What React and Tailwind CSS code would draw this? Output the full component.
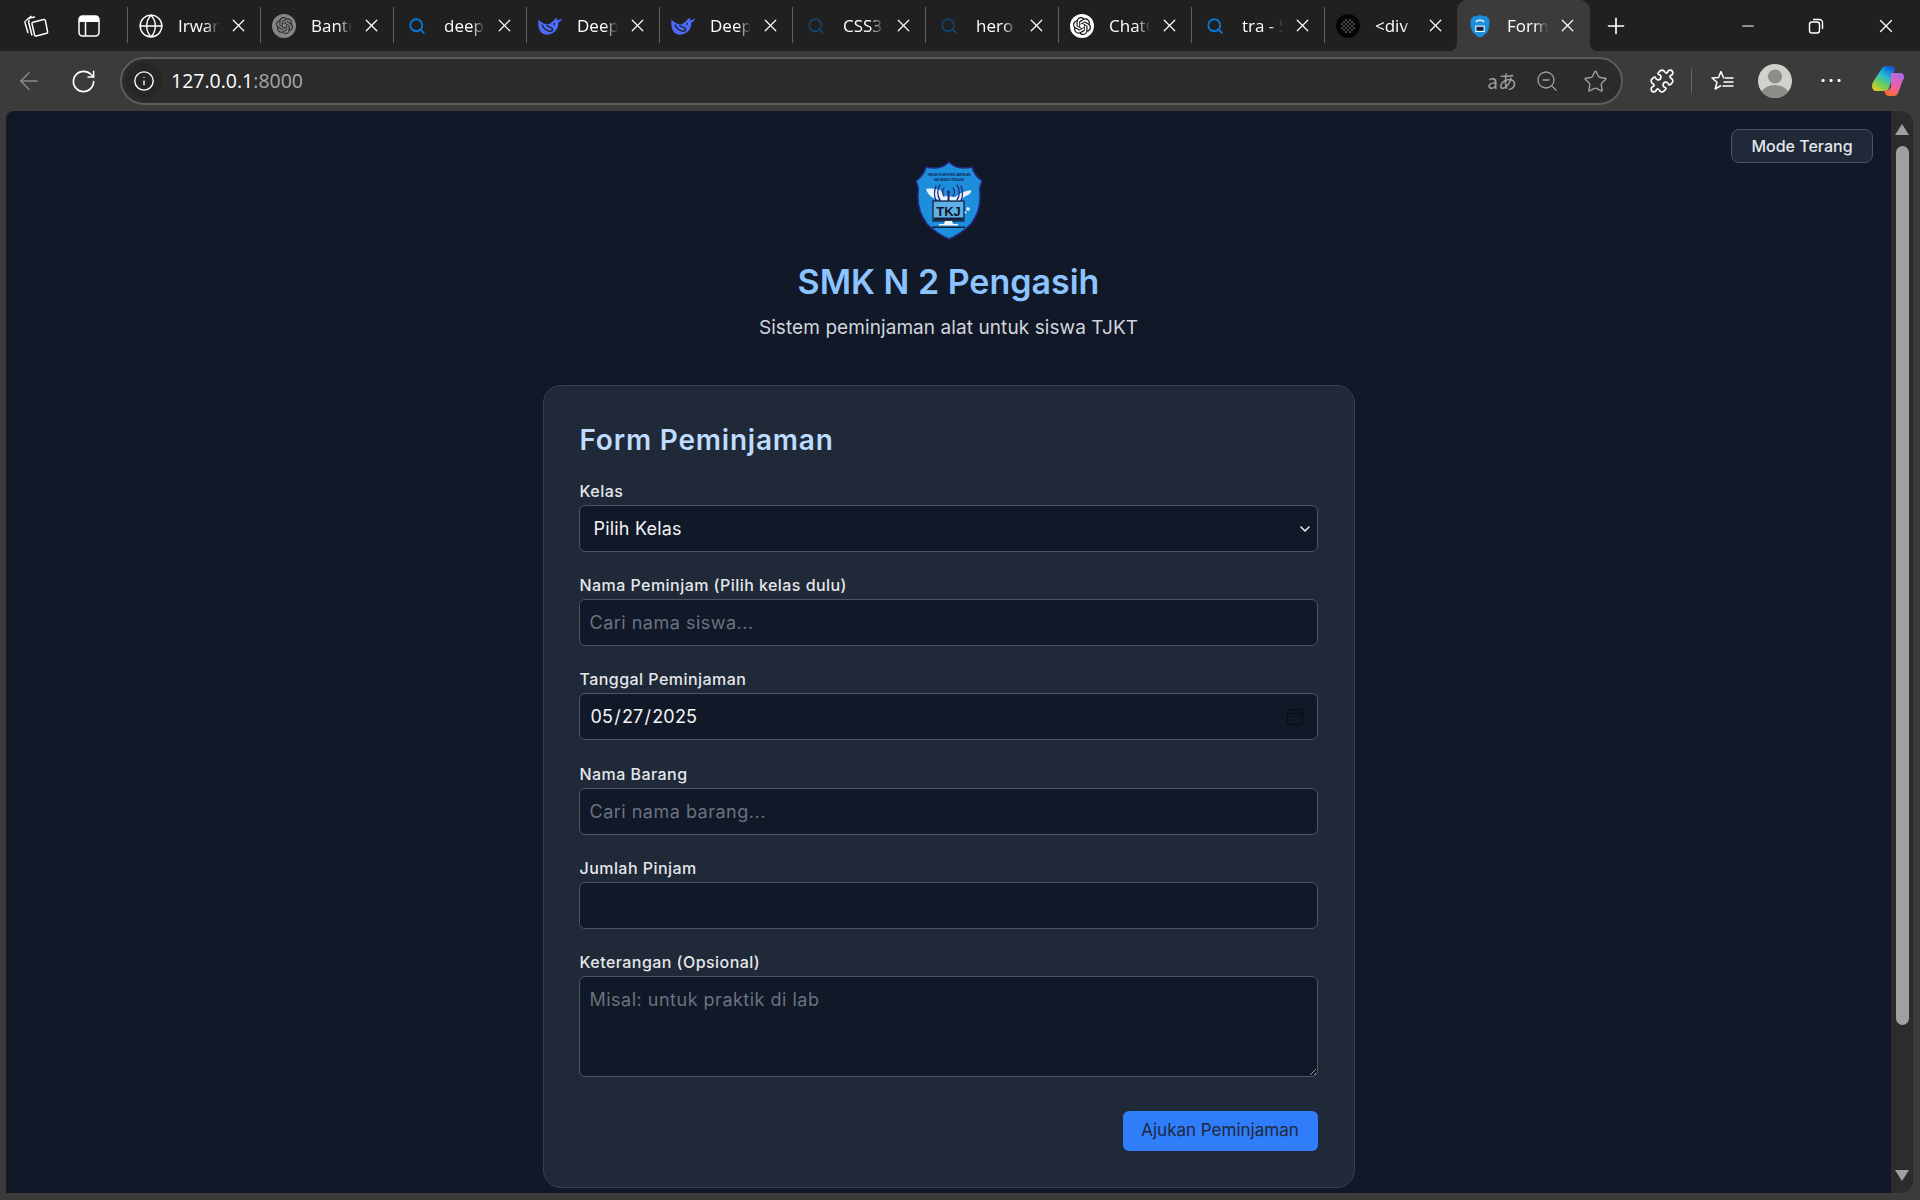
import { ArrowLeft, ChevronDown, Globe, Info, Minus, Plus, Puzzle, RotateCw, Search, Star, X, ZoomOut } from "lucide-react";
import { SiOpenai } from "react-icons/si";

function Workspaces() {
  return (
    <svg width="26" height="26" viewBox="0 0 26 26" fill="none" stroke="#fff" strokeWidth="1.5" strokeLinejoin="round">
      <path d="M3 7.5 8.5 3M5 20 2 9.5q-.3-1.2.8-1.6" />
      <path d="M6 6q.2-1.2 1.4-1.3L12 4M9 22.5 5.6 9q-.3-1.3 1-1.7" />
      <path d="M10 9.2 20.6 6.6q1.4-.3 1.8 1l2.2 11q.3 1.3-1 1.7L13.4 23q-1.4.3-1.8-1L9 10.9q-.3-1.3 1-1.7Z" />
    </svg>
  );
}

function VerticalTabs() {
  return (
    <svg width="22" height="22" viewBox="0 0 22 22" fill="none">
      <rect x="1" y="1" width="20" height="20" rx="3.5" stroke="#fff" strokeWidth="1.5" />
      <path d="M1 4.5A3.5 3.5 0 0 1 4.5 1h13A3.5 3.5 0 0 1 21 4.5V7H1Z" fill="#fff" />
      <path d="M7.5 7v14" stroke="#fff" strokeWidth="1.5" />
    </svg>
  );
}

function Whale() {
  return (
    <svg width="25" height="20" viewBox="0 0 24 19">
      <path
        d="M.5 3.500C3 6 6 8 9 8c2.500 0 3.500-2 6-3.500.5-1.500 2-2.500 3.500-3l-.5 2.500c1.500 0 3.500-.7 5-2-.3 2-1.800 3.500-3.500 4.200.3 5-2.500 9.500-7.500 11C7 19 2.500 17 1 12 .2 9 .2 6 .5 3.500Z"
        fill="#4d6bfe"
      />
      <path d="M4 8.500c1.500 3.500 4.500 6 8.500 6 1.800 0 2-2.500.3-3.200-1.500-.6-3-1.300-4.300-2.300" fill="none" stroke="#202020" strokeWidth="1.300" strokeLinecap="round" />
      <circle cx="15.500" cy="7.500" r=".9" fill="#202020" />
    </svg>
  );
}

function DotsFavicon() {
  const dots = [];
  for (let y = 0; y < 7; y++) {
    for (let x = 0; x < 7; x++) {
      if ((x - 3) * (x - 3) + (y - 3) * (y - 3) < 11 && (x + y) % 2 === 0) {
        dots.push(<rect key={`${x}-${y}`} x={5.4 + x * 2} y={5.4 + y * 2} width="1.3" height="1.3" fill="#a3a3a3" />);
      }
    }
  }
  return (
    <svg width="24" height="24" viewBox="0 0 24 24">
      <circle cx="12" cy="12" r="12" fill="#050505" />
      {dots}
    </svg>
  );
}

function Shield({ width, height, small = false }) {
  return (
    <svg width={width} height={height} viewBox="0 0 68 79">
      <path
        d="M34 1Q28 7 20 7 14 7 11 6 9 14 1 20 4 26 3 33 2 50 12 63 22 73 34 78 46 73 56 63 66 50 65 33 64 26 67 20 59 14 57 6 54 7 48 7 40 7 34 1Z"
        fill="#1c8edb"
        stroke={small ? "#1c8edb" : "#26277f"}
        strokeWidth="1.500"
      />
      {!small && (
        <>
          <text x="34" y="15" textAnchor="middle" fontSize="3.600" fontWeight="700" fill="#10204f" fontFamily="Liberation Sans" textLength="43" lengthAdjust="spacingAndGlyphs">TEKNIK KOMPUTER JARINGAN</text>
          <text x="34" y="19.500" textAnchor="middle" fontSize="3.400" fontWeight="700" fill="#10204f" fontFamily="Liberation Sans" textLength="30" lengthAdjust="spacingAndGlyphs">SMK NEGERI 2 PENGASIH</text>
          <path d="M11 28c5-1 9 0 14 1l5 6 10 1 8-5 8-2c1 2-2 5-5 6l-5 3-3 5-12 1-6-5-7-2c-3-2-6-5-7-9Z" fill="#e8f4fb" />
          <path d="M52 46l3 1-1 3-3-1ZM49 50l3 1-2 2Z" fill="#e8f4fb" />
          <g fill="none" stroke="#26277f" strokeWidth="1.300" strokeLinecap="round">
            <path d="M29 27c-2 2-2 6 0 8M38 27c2 2 2 6 0 8M25 24c-3 4-3 11 0 15M42 24c3 4 3 11 0 15M21 25c-2 5-2 10 0 15M46 25c2 5 2 10 0 15" />
          </g>
          <circle cx="33.500" cy="31" r="1.600" fill="#26277f" />
          <path d="M32.500 32h2v8h-2Z" fill="#26277f" />
          <rect x="18" y="40" width="31" height="20" fill="#5fb0e6" stroke="#14213d" strokeWidth="1.300" />
          <rect x="19" y="56.500" width="29" height="3" fill="#14213d" />
          <text x="33.500" y="54.500" textAnchor="middle" fontSize="13" fontWeight="700" fill="#0e1726" fontFamily="Liberation Sans">TKJ</text>
          <path d="M30 60h7l1 3h5v1.500H24V63h5Z" fill="#f3f8fb" />
          <rect x="17" y="65.500" width="33" height="1.500" fill="#14213d" />
        </>
      )}
      {small && (
        <>
          <rect x="18" y="38" width="32" height="22" fill="#e8f4fb" />
          <rect x="22" y="42" width="24" height="14" fill="#14213d" />
          <path d="M20 26c6-8 22-8 28 0" fill="none" stroke="#e8f4fb" strokeWidth="5" />
        </>
      )}
    </svg>
  );
}

function Restore() {
  return (
    <svg width="18" height="18" viewBox="0 0 18 18" fill="none" stroke="#fff" strokeWidth="1.400">
      <rect x="2.500" y="5" width="10" height="11" rx="2.500" />
      <path d="M6 2.500h6.500a3 3 0 0 1 3 3V12" />
    </svg>
  );
}

function Favorites() {
  return (
    <svg width="26" height="26" viewBox="0 0 26 26" fill="none" stroke="#fff" strokeWidth="1.500" strokeLinejoin="round">
      <path d="M15 9.800h-.5L12 3.500 9.500 9.500l-6.500.5 5 4.300-1.800 6.700 5.800-3.500" />
      <path d="M16 10h8M15 14h9M14 18h10" strokeLinecap="round" />
    </svg>
  );
}

function Avatar() {
  return (
    <svg width="34" height="34" viewBox="0 0 34 34">
      <clipPath id="avatar-clip"><circle cx="17" cy="17" r="17" /></clipPath>
      <g clipPath="url(#avatar-clip)">
        <rect width="34" height="34" fill="#d2d1cc" />
        <circle cx="17" cy="12.500" r="7" fill="#8e8c87" />
        <ellipse cx="17" cy="31" rx="14" ry="10" fill="#8e8c87" />
      </g>
    </svg>
  );
}

function Copilot() {
  return (
    <svg width="34" height="32" viewBox="0 0 34 32">
      <defs>
        <linearGradient id="cp-left" x1="0.700" y1="0" x2="0.100" y2="1">
          <stop offset="0" stopColor="#0f5fd8" />
          <stop offset="0.350" stopColor="#22b8d6" />
          <stop offset="0.700" stopColor="#7bd04a" />
          <stop offset="1" stopColor="#f7c92e" />
        </linearGradient>
        <linearGradient id="cp-right" x1="0.800" y1="0" x2="0.300" y2="1">
          <stop offset="0" stopColor="#a86bf0" />
          <stop offset="0.550" stopColor="#ee5fa4" />
          <stop offset="1" stopColor="#f5702e" />
        </linearGradient>
      </defs>
      <path d="M11 3q1-2 4-2h5q3 0 4 3l-6 19q-1 3-4 3H6q-5 0-5-5 0-2 1-4Z" fill="url(#cp-left)" />
      <path d="M20 8h9q4 0 4 4 0 2-1 3l-5 13q-1 3-4 3h-5q-3 0-4-3l-1-3h3q3 0 4-3Z" fill="url(#cp-right)" />
    </svg>
  );
}

function CalendarIcon() {
  return (
    <svg width="18" height="18" viewBox="0 0 18 18" fill="none" stroke="#0a0e17" strokeWidth="1.400">
      <rect x="1.500" y="1.500" width="15" height="15" rx="2.500" />
      <path d="M1.500 5.500h15" />
      <path d="M5 9h1.500M8.300 9h1.500M11.600 9h1.500M5 12.500h1.500M8.300 12.500h1.500" strokeWidth="1.800" />
    </svg>
  );
}

const TABS = [
  { title: "Irwan", icon: <Globe size={26} strokeWidth={1.3} color="#fff" /> },
  { title: "Bantu", icon: <span className="flex h-6 w-6 items-center justify-center rounded-full bg-[#858585]"><SiOpenai size={17} color="#2a2a2a" /></span> },
  { title: "deepseek", icon: <Search size={18} strokeWidth={2.4} color="#0a78d4" /> },
  { title: "Deep", icon: <Whale /> },
  { title: "Deep", icon: <Whale /> },
  { title: "CSS3", icon: <Search size={18} strokeWidth={2.4} color="#16406a" /> },
  { title: "hero", icon: <Search size={18} strokeWidth={2.4} color="#16406a" /> },
  { title: "ChatG", icon: <span className="flex h-6 w-6 items-center justify-center rounded-full bg-white"><SiOpenai size={18} color="#111" /></span> },
  { title: "tra - Sea", icon: <Search size={18} strokeWidth={2.4} color="#0a78d4" /> },
  { title: "<div", icon: <DotsFavicon /> },
];

function Tab({ title, icon, active }) {
  return (
    <div className={`relative flex h-[51px] w-[133px] shrink-0 items-center ${active ? "rounded-t-[10px] bg-[#3b3b3b]" : "border-l border-[#5a5a5a] [border-image:linear-gradient(transparent_8px,#5f5f5f_8px,#5f5f5f_42px,transparent_42px)_1]"}`}>
      {active && (
        <>
          <svg width="8" height="8" viewBox="0 0 8 8" className="absolute -left-2 bottom-0"><path d="M8 0v8H0q8 0 8-8Z" fill="#3b3b3b" /></svg>
          <svg width="8" height="8" viewBox="0 0 8 8" className="absolute -right-2 bottom-0"><path d="M0 0v8h8Q0 8 0 0Z" fill="#3b3b3b" /></svg>
        </>
      )}
      <span className="flex w-[46px] shrink-0 justify-center">{icon}</span>
      <span className="w-[45px] shrink-0 overflow-hidden whitespace-nowrap pl-[4px] font-['Open_Sans',sans-serif] text-[17px] text-white [mask-image:linear-gradient(to_right,black_70%,transparent)]">{title}</span>
      <X size={21} strokeWidth={1.4} color="#fff" className="ml-[9px] shrink-0" />
    </div>
  );
}

function Field({ label, children }) {
  return (
    <div>
      <label className="mb-1 block h-5 pl-px text-[16px] font-medium leading-5 tracking-[0.45px] text-[#e5e7eb]">{label}</label>
      {children}
    </div>
  );
}

const inputCls = "block w-full rounded-md border border-[#4b5563] bg-[#111827] px-[7px] text-[18px] tracking-[0.2px] text-[#f3f4f6] outline-none placeholder:tracking-[0.5px] placeholder:text-[#6b7280]";

function Scrollbar() {
  return (
    <div className="flex w-[22px] shrink-0 flex-col items-center rounded-br-xl rounded-tr-xl bg-[#2c2c2c] pb-[12px] pt-[13px]">
      <span className="h-0 w-0 border-x-[7px] border-b-[11px] border-x-transparent border-b-[#a0a0a0]" />
      <span className="mt-[11px] h-[879px] w-[13px] rounded-full bg-[#a0a0a0]" />
      <span className="mt-auto h-0 w-0 border-x-[7px] border-t-[11px] border-x-transparent border-t-[#a0a0a0]" />
    </div>
  );
}

export default function App() {
  return (
    <div className="flex h-[1200px] w-[1920px] flex-col overflow-hidden bg-[#3b3b3b] font-['Inter',sans-serif]">
      {/* tab strip */}
      <div className="flex h-[51px] shrink-0 items-center bg-[#202020]">
        <div className="flex w-[127px] shrink-0 items-center">
          <span className="ml-[23px]"><Workspaces /></span>
          <span className="ml-[29px]"><VerticalTabs /></span>
        </div>
        {TABS.map((t, i) => <Tab key={i} {...t} />)}
        <Tab title="Formulir" icon={<Shield width={20} height={24} small />} active />
        <Plus size={26} strokeWidth={1.500} color="#fff" className="ml-[13px]" />
        <div className="ml-auto flex items-center">
          <Minus size={18} strokeWidth={1.600} color="#fff" className="mr-[50px]" />
          <span className="mr-[50px]"><Restore /></span>
          <X size={22} strokeWidth={1.300} color="#fff" className="mr-[23px]" />
        </div>
      </div>

      {/* toolbar */}
      <div className="flex h-[60px] shrink-0 items-center bg-[#3b3b3b]">
        <ArrowLeft size={28} strokeWidth={1.200} color="#8b8b8b" className="ml-[15px]" />
        <RotateCw size={27} strokeWidth={1.400} color="#fff" className="ml-[27px]" />
        <div className="ml-[23px] flex h-[48px] w-[1503px] items-center rounded-full border-2 border-[#5c5c5c] bg-[#2b2b2b] pl-[4px] pr-[13px]">
          <span className="flex h-[36px] w-[36px] items-center justify-center rounded-full bg-[#262626]">
            <Info size={22} strokeWidth={1.500} color="#fff" />
          </span>
          <span className="ml-[9px] font-['Open_Sans',sans-serif] text-[19.500px] text-white">127.0.0.1<span className="text-[#a8a8a8]">:8000</span></span>
          <span className="ml-auto font-['Noto_Sans_CJK_JP',sans-serif] text-[19px] text-[#a0a0a0]">aあ</span>
          <ZoomOut size={24} strokeWidth={1.300} color="#a0a0a0" className="ml-[18px]" />
          <Star size={25} strokeWidth={1.300} color="#a0a0a0" className="ml-[24px]" />
        </div>
        <Puzzle size={26} strokeWidth={1.500} color="#fff" className="ml-[26px]" />
        <span className="ml-[16px] h-[24px] w-px bg-[#666]" />
        <span className="ml-[17px] flex"><Favorites /></span>
        <span className="ml-[23px] flex"><Avatar /></span>
        <span className="ml-[28px] text-[18px] font-bold leading-none tracking-[2px] text-white">···</span>
        <span className="ml-[27px] flex"><Copilot /></span>
      </div>

      {/* page */}
      <div className="mb-[7px] ml-[6px] mr-[7px] flex min-h-0 flex-1">
        <div className="relative flex min-w-0 flex-1 flex-col items-center overflow-hidden rounded-tl-lg bg-[#111827] pt-[50px]">
          <button className="absolute right-[18px] top-[18px] flex h-[34px] w-[142px] items-center justify-center rounded-lg border border-[#4b5563] bg-[#1f2937] pb-px text-[16px] font-medium text-[#e5e7eb]">Mode Terang</button>

          <Shield width={68} height={79} />
          <h1 className="mt-[15px] h-[54px] text-[34px] font-semibold leading-[54px] text-[#8cc4ff]">SMK N 2 Pengasih</h1>
          <p className="mt-[5px] h-[27px] text-[19px] leading-[27px] tracking-[0.08px] text-[#d1d5db]">Sistem peminjaman alat untuk siswa TJKT</p>

          <div className="mt-[44px] w-[812px] shrink-0 rounded-[18px] border border-[#374151] bg-[#1f2937] pb-[36px] pl-[35px] pr-[36px] pt-[36px]">
            <h2 className="mb-[23px] h-9 pl-px text-[28px] font-semibold leading-9 tracking-[0.8px] text-[#bfdbfe]">Form Peminjaman</h2>
            <div className="flex flex-col gap-[23.200px]">
              <Field label="Kelas">
                <div className="relative">
                  <select className={`${inputCls} h-[47px] appearance-none pl-[14px]`} defaultValue="">
                    <option value="">Pilih Kelas</option>
                  </select>
                  <ChevronDown size={16} strokeWidth={2.4} color="#e5e7eb" className="pointer-events-none absolute right-[5px] top-[16px]" />
                </div>
              </Field>
              <Field label="Nama Peminjam (Pilih kelas dulu)">
                <input className={`${inputCls} h-[47px] pl-[10px]`} placeholder="Cari nama siswa..." />
              </Field>
              <Field label="Tanggal Peminjaman">
                <div className="relative">
                  <input type="date" className={`${inputCls} h-[47px] pl-[10px] [&::-webkit-calendar-picker-indicator]:opacity-0`} defaultValue="2025-05-27" />
                  <span className="pointer-events-none absolute right-[14px] top-[15px] flex"><CalendarIcon /></span>
                </div>
              </Field>
              <Field label="Nama Barang">
                <input className={`${inputCls} h-[47px] pl-[10px]`} placeholder="Cari nama barang..." />
              </Field>
              <Field label="Jumlah Pinjam">
                <input type="number" className={`${inputCls} h-[47px] pl-[10px]`} />
              </Field>
              <Field label="Keterangan (Opsional)">
                <textarea className={`${inputCls} h-[101px] pl-[10px] py-[9px]`} placeholder="Misal: untuk praktik di lab" />
              </Field>
            </div>
            <div className="mt-[34px] flex justify-end">
              <button className="h-[40px] w-[195px] rounded-md bg-[#2f7dfb] text-[17px] text-[#1f2937]">Ajukan Peminjaman</button>
            </div>
          </div>
        </div>
        <Scrollbar />
      </div>
    </div>
  );
}
